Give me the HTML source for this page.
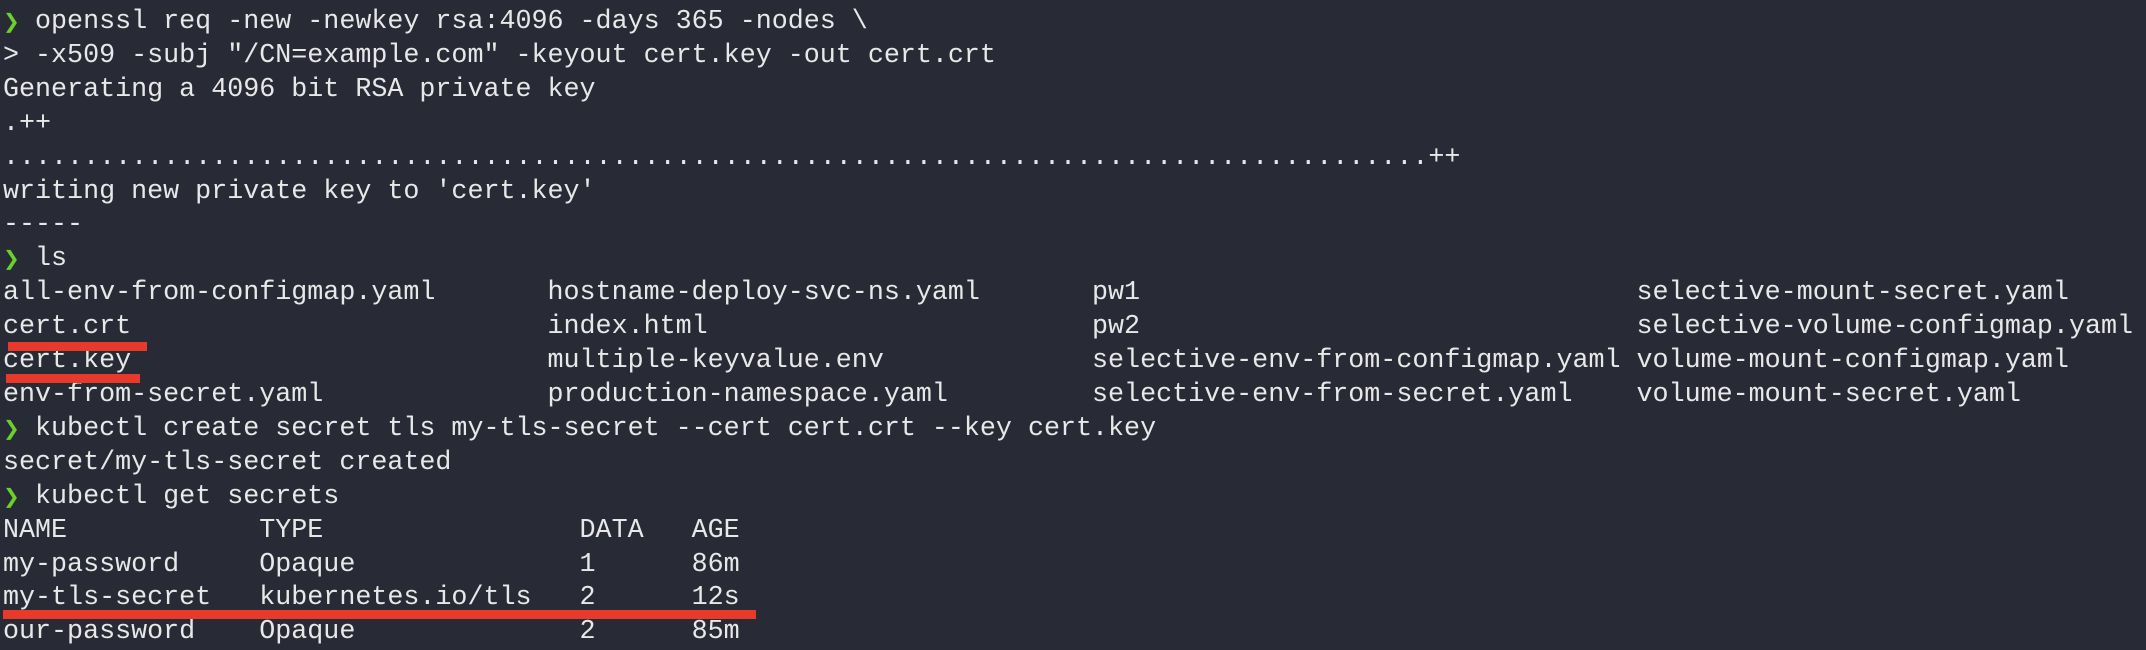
<!DOCTYPE html>
<html><head><style>
html,body{margin:0;padding:0;}
body{width:2146px;height:648px;background:#282a36;overflow:hidden;position:relative;}
pre{margin:0;position:absolute;left:3px;top:6px;font-family:"Liberation Mono",monospace;font-size:26.7px;line-height:33.9px;color:#e8e8e8;white-space:pre;}
.g{color:#6ad02c;display:inline-block;width:16.02px;font-family:"DejaVu Sans",sans-serif;font-size:20px;line-height:20px;vertical-align:baseline;}
.bar{position:absolute;background:#e8392a;}
</style></head><body>
<pre><span class="g">❯</span> openssl req -new -newkey rsa:4096 -days 365 -nodes \
&gt; -x509 -subj "/CN=example.com" -keyout cert.key -out cert.crt
Generating a 4096 bit RSA private key
.++
.........................................................................................++
writing new private key to 'cert.key'
-----
<span class="g">❯</span> ls
all-env-from-configmap.yaml       hostname-deploy-svc-ns.yaml       pw1                               selective-mount-secret.yaml
cert.crt                          index.html                        pw2                               selective-volume-configmap.yaml
cert.key                          multiple-keyvalue.env             selective-env-from-configmap.yaml volume-mount-configmap.yaml
env-from-secret.yaml              production-namespace.yaml         selective-env-from-secret.yaml    volume-mount-secret.yaml
<span class="g">❯</span> kubectl create secret tls my-tls-secret --cert cert.crt --key cert.key
secret/my-tls-secret created
<span class="g">❯</span> kubectl get secrets
NAME            TYPE                DATA   AGE
my-password     Opaque              1      86m
my-tls-secret   kubernetes.io/tls   2      12s
our-password    Opaque              2      85m</pre>
<div class="bar" style="left:8px;top:342px;width:139px;height:9px"></div>
<div class="bar" style="left:6px;top:374px;width:134px;height:9px"></div>
<div class="bar" style="left:3px;top:610px;width:753px;height:9px"></div>
</body></html>
